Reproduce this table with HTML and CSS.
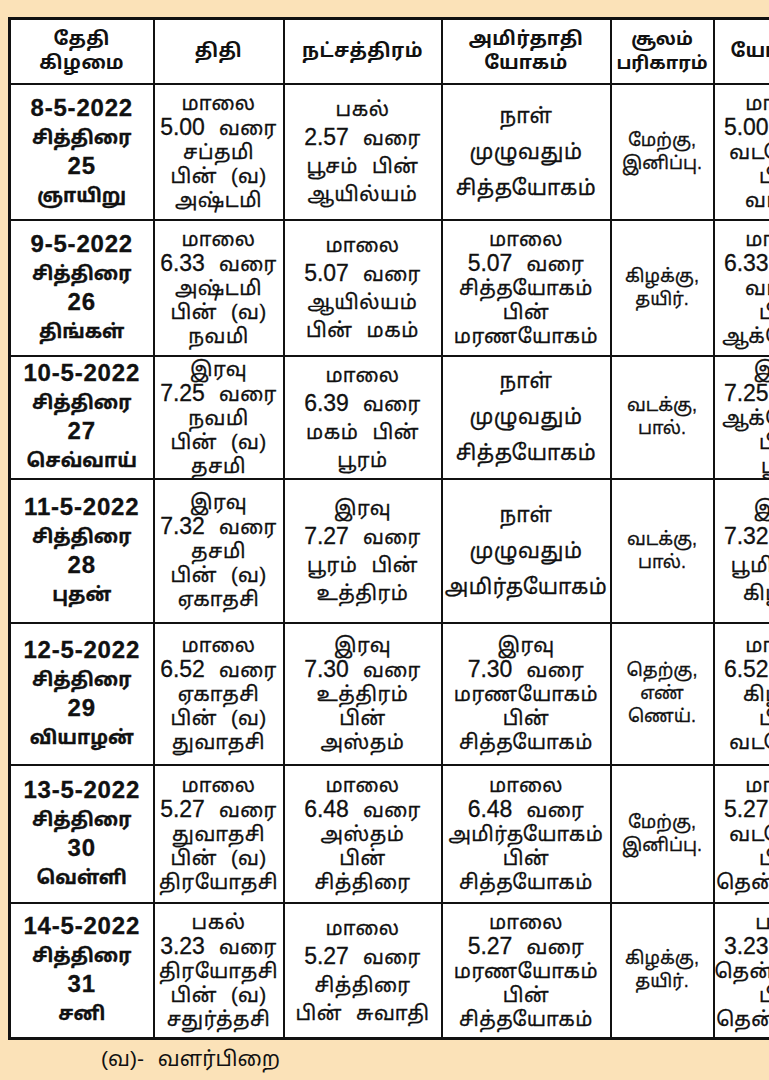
FILE: index.html
```html
<!DOCTYPE html>
<html lang="ta">
<head>
<meta charset="utf-8">
<title>பஞ்சாங்கம்</title>
<link rel="stylesheet" href="styles.css">
</head>
<body>
<div class="page">
  <div class="frame">
    <table class="cal">
      <colgroup>
        <col class="c-date"><col class="c-tithi"><col class="c-star"><col class="c-yoga"><col class="c-soolam"><col class="c-yogini">
      </colgroup>
      <thead>
        <tr class="rh">
          <th>தேதி<br>கிழமை</th>
          <th>திதி</th>
          <th>நட்சத்திரம்</th>
          <th>அமிர்தாதி<br>யோகம்</th>
          <th class="tight">சூலம்<br>பரிகாரம்</th>
          <th>யோகினி</th>
        </tr>
      </thead>
      <tbody>
        <tr class="r1">
          <td class="date"><span class="n">8-5-2022</span><br>சித்திரை<br><span class="n">25</span><br>ஞாயிறு</td>
          <td class="dense">மாலை<br><span class="n">5.00</span> வரை<br>சப்தமி<br>பின் (வ)<br>அஷ்டமி</td>
          <td class="mid">பகல்<br><span class="n">2.57</span> வரை<br>பூசம் பின்<br>ஆயில்யம்</td>
          <td class="airy">நாள்<br>முழுவதும்<br>சித்தயோகம்</td>
          <td class="small">மேற்கு,<br>இனிப்பு.</td>
          <td class="dense">மாலை<br><span class="n">5.00</span> வரை<br>வடமேற்கு<br>பின்<br>வடக்கு</td>
        </tr>
        <tr class="r2">
          <td class="date"><span class="n">9-5-2022</span><br>சித்திரை<br><span class="n">26</span><br>திங்கள்</td>
          <td class="dense">மாலை<br><span class="n">6.33</span> வரை<br>அஷ்டமி<br>பின் (வ)<br>நவமி</td>
          <td class="mid">மாலை<br><span class="n">5.07</span> வரை<br>ஆயில்யம்<br>பின் மகம்</td>
          <td class="dense">மாலை<br><span class="n">5.07</span> வரை<br>சித்தயோகம்<br>பின்<br>மரணயோகம்</td>
          <td class="small">கிழக்கு,<br>தயிர்.</td>
          <td class="dense">மாலை<br><span class="n">6.33</span> வரை<br>வடக்கு<br>பின்<br>ஆக்னேயம்</td>
        </tr>
        <tr class="r3">
          <td class="date"><span class="n">10-5-2022</span><br>சித்திரை<br><span class="n">27</span><br>செவ்வாய்</td>
          <td class="dense">இரவு<br><span class="n">7.25</span> வரை<br>நவமி<br>பின் (வ)<br>தசமி</td>
          <td class="mid">மாலை<br><span class="n">6.39</span> வரை<br>மகம் பின்<br>பூரம்</td>
          <td class="airy">நாள்<br>முழுவதும்<br>சித்தயோகம்</td>
          <td class="small">வடக்கு,<br>பால்.</td>
          <td class="dense">இரவு<br><span class="n">7.25</span> வரை<br>ஆக்னேயம்<br>பின்<br>பூமி</td>
        </tr>
        <tr class="r4">
          <td class="date"><span class="n">11-5-2022</span><br>சித்திரை<br><span class="n">28</span><br>புதன்</td>
          <td class="dense">இரவு<br><span class="n">7.32</span> வரை<br>தசமி<br>பின் (வ)<br>ஏகாதசி</td>
          <td class="mid">இரவு<br><span class="n">7.27</span> வரை<br>பூரம் பின்<br>உத்திரம்</td>
          <td class="airy">நாள்<br>முழுவதும்<br>அமிர்தயோகம்</td>
          <td class="small">வடக்கு,<br>பால்.</td>
          <td class="mid">இரவு<br><span class="n">7.32</span> வரை<br>பூமி பின்<br>கிழக்கு</td>
        </tr>
        <tr class="r5">
          <td class="date"><span class="n">12-5-2022</span><br>சித்திரை<br><span class="n">29</span><br>வியாழன்</td>
          <td class="dense">மாலை<br><span class="n">6.52</span> வரை<br>ஏகாதசி<br>பின் (வ)<br>துவாதசி</td>
          <td class="dense">இரவு<br><span class="n">7.30</span> வரை<br>உத்திரம்<br>பின்<br>அஸ்தம்</td>
          <td class="dense">இரவு<br><span class="n">7.30</span> வரை<br>மரணயோகம்<br>பின்<br>சித்தயோகம்</td>
          <td class="small">தெற்கு,<br>எண்<br>ணெய்.</td>
          <td class="dense">மாலை<br><span class="n">6.52</span> வரை<br>கிழக்கு<br>பின்<br>வடமேற்கு</td>
        </tr>
        <tr class="r6">
          <td class="date"><span class="n">13-5-2022</span><br>சித்திரை<br><span class="n">30</span><br>வெள்ளி</td>
          <td class="dense">மாலை<br><span class="n">5.27</span> வரை<br>துவாதசி<br>பின் (வ)<br>திரயோதசி</td>
          <td class="dense">மாலை<br><span class="n">6.48</span> வரை<br>அஸ்தம்<br>பின்<br>சித்திரை</td>
          <td class="dense">மாலை<br><span class="n">6.48</span> வரை<br>அமிர்தயோகம்<br>பின்<br>சித்தயோகம்</td>
          <td class="small">மேற்கு,<br>இனிப்பு.</td>
          <td class="dense">மாலை<br><span class="n">5.27</span> வரை<br>வடமேற்கு<br>பின்<br>தென்மேற்கு</td>
        </tr>
        <tr class="r7">
          <td class="date"><span class="n">14-5-2022</span><br>சித்திரை<br><span class="n">31</span><br>சனி</td>
          <td class="dense">பகல்<br><span class="n">3.23</span> வரை<br>திரயோதசி<br>பின் (வ)<br>சதுர்த்தசி</td>
          <td class="mid">மாலை<br><span class="n">5.27</span> வரை<br>சித்திரை<br>பின் சுவாதி</td>
          <td class="dense">மாலை<br><span class="n">5.27</span> வரை<br>மரணயோகம்<br>பின்<br>சித்தயோகம்</td>
          <td class="small">கிழக்கு,<br>தயிர்.</td>
          <td class="dense">பகல்<br><span class="n">3.23</span> வரை<br>தென்கிழக்கு<br>பின்<br>தென்மேற்கு</td>
        </tr>
      </tbody>
    </table>
  </div>
  <p class="note">(வ)- வளர்பிறை</p>
</div>
</body>
</html>
```
FILE: styles.css
```css
html, body {
  margin: 0;
  padding: 0;
}
body {
  background: #fbe2b8;
  width: 769px;
  height: 1080px;
  overflow: hidden;
  font-family: "Liberation Sans", "Noto Sans Tamil", "Lohit Tamil", "Latha", "Noto Sans", sans-serif;
  color: #111;
}
.page {
  padding-top: 17px;
  padding-left: 8px;
}
.frame {
  width: 761px;
  overflow: hidden;
}
.cal {
  border-collapse: collapse;
  table-layout: fixed;
  width: 842px;
  background: #fff;
  border: 3px solid #111;
}
.c-date { width: 144px; }
.c-tithi { width: 130px; }
.c-star { width: 158px; }
.c-yoga { width: 169px; }
.c-soolam { width: 103px; }
.c-yogini { width: 138px; }
.cal th, .cal td {
  border: 2px solid #111;
  text-align: center;
  vertical-align: middle;
  padding: 0;
  overflow: hidden;
  white-space: nowrap;
}
.cal th {
  font-weight: 700;
  font-size: 19px;
  line-height: 24px;
  letter-spacing: 0.5px;
}
.cal th.tight {
  font-size: 18px;
  letter-spacing: 0;
}
.rh { height: 65px; }
.r1 { height: 136px; }
.r2 { height: 136px; }
.r3 { height: 123px; }
.r4 { height: 144px; }
.r5 { height: 142px; }
.r6 { height: 138px; }
.r7 { height: 136px; }
.cal td {
  font-size: 20px;
  letter-spacing: 0.5px;
  word-spacing: 8px;
  -webkit-text-stroke: 0.3px #111;
}
.cal td .n {
  font-size: 23px;
  letter-spacing: 0;
}
.cal td.date {
  font-weight: 700;
  font-size: 19px;
  line-height: 28px;
  letter-spacing: 0;
}
.cal td.date .n {
  font-size: 24px;
  letter-spacing: 0.8px;
}
.cal td.dense { line-height: 24px; }
.cal td.mid { line-height: 28px; }
.cal td.airy {
  line-height: 36px;
  font-size: 21px;
}
.cal td.small {
  font-size: 18px;
  line-height: 23px;
  letter-spacing: 0;
}
.note {
  margin: 6px 0 0 93px;
  font-size: 21px;
  line-height: 26px;
  word-spacing: 8px;
}
```
